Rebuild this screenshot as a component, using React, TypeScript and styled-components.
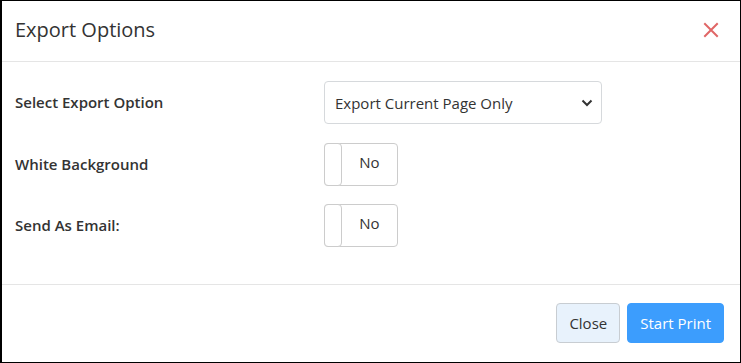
import React from "react";
import styled, { createGlobalStyle } from "styled-components";

const Global = createGlobalStyle`
  html, body { margin: 0; padding: 0; background: #fff; }
  body { font-family: "Open Sans", "Noto Sans", sans-serif; color: #333; }
`;

const Modal = styled.div`
  box-sizing: border-box;
  width: 741px;
  height: 363px;
  border: 1px solid #000;
  border-left-width: 2px;
  background: #fff;
  display: flex;
  flex-direction: column;
`;

const Header = styled.div`
  height: 60px;
  border-bottom: 1px solid #e5e5e5;
  display: flex;
  align-items: center;
  justify-content: space-between;
  padding: 0 21px 0 13px;
`;

const Title = styled.h4`
  margin: 0;
  font-size: 20px;
  font-weight: 400;
  color: #333;
  padding-bottom: 3px;
`;

const CloseX = styled.button`
  border: 0;
  background: none;
  padding: 0;
  width: 16px;
  height: 16px;
  display: flex;
  align-items: center;
  justify-content: center;
  cursor: pointer;
  margin-bottom: 2px;
`;

const Body = styled.div`
  flex: 1;
  padding: 19px 13px 0 13px;
  display: flex;
  flex-direction: column;
  gap: 18.5px;
  border-bottom: 1px solid #e5e5e5;
`;

const Row = styled.div`
  display: grid;
  grid-template-columns: 309px 1fr;
  align-items: center;
`;

const Label = styled.label`
  font-size: 15px;
  font-weight: 600;
  color: #333;
  padding-bottom: 1px;
`;

const SelectWrap = styled.div`
  position: relative;
  width: 278px;
`;

const Select = styled.select`
  appearance: none;
  -webkit-appearance: none;
  width: 100%;
  height: 43px;
  box-sizing: border-box;
  border: 1px solid #d6d9dc;
  border-radius: 4px;
  background: #fff;
  padding: 0 30px 0 10px;
  font-family: "Open Sans", "Noto Sans", sans-serif;
  font-size: 15px;
  color: #333;
  outline: none;
`;

const Chevron = styled.svg`
  position: absolute;
  right: 9px;
  top: 18px;
  pointer-events: none;
`;

const Toggle = styled.div`
  box-sizing: border-box;
  width: 74px;
  height: 43px;
  border: 1px solid #ccc;
  border-radius: 4px;
  display: flex;
  align-items: stretch;
  background: #fff;
`;

const Handle = styled.span`
  width: 16px;
  margin: -1px 0 -1px -1px;
  border: 1px solid #ccc;
  border-radius: 4px;
  background: #fff;
`;

const ToggleText = styled.span`
  flex: 1;
  display: flex;
  align-items: center;
  justify-content: center;
  font-size: 15px;
  color: #333;
  padding-bottom: 5px;
`;

const Footer = styled.div`
  height: 77px;
  display: flex;
  align-items: center;
  justify-content: flex-end;
  gap: 7px;
  padding: 0 16px 2px 0;
  box-sizing: border-box;
`;

const Button = styled.button<{ $primary?: boolean }>`
  height: 40px;
  box-sizing: border-box;
  border-radius: 4px;
  font-family: "Open Sans", "Noto Sans", sans-serif;
  font-size: 15px;
  padding: 0 12px;
  cursor: pointer;
  border: 1px solid ${(p) => (p.$primary ? "#3c9dfd" : "#c8cdd2")};
  background: ${(p) => (p.$primary ? "#3c9dfd" : "#e8f2fc")};
  color: ${(p) => (p.$primary ? "#fff" : "#333")};
`;

function ToggleField() {
  return (
    <Toggle>
      <Handle />
      <ToggleText>No</ToggleText>
    </Toggle>
  );
}

export default function App() {
  return (
    <>
      <Global />
      <Modal>
        <Header>
          <Title>Export Options</Title>
          <CloseX aria-label="Close">
            <svg width="16" height="16" viewBox="0 0 16 16">
              <path d="M2 2 L14 14 M14 2 L2 14" stroke="#e06666" strokeWidth="2" strokeLinecap="square" />
            </svg>
          </CloseX>
        </Header>
        <Body>
          <Row>
            <Label>Select Export Option</Label>
            <SelectWrap>
              <Select defaultValue="current">
                <option value="current">Export Current Page Only</option>
                <option value="all">Export All Pages</option>
              </Select>
              <Chevron width="12" height="8" viewBox="0 0 12 8">
                <path d="M1.5 1.5 L6 6 L10.5 1.5" fill="none" stroke="#333" strokeWidth="2" />
              </Chevron>
            </SelectWrap>
          </Row>
          <Row>
            <Label>White Background</Label>
            <ToggleField />
          </Row>
          <Row>
            <Label>Send As Email:</Label>
            <ToggleField />
          </Row>
        </Body>
        <Footer>
          <Button>Close</Button>
          <Button $primary>Start Print</Button>
        </Footer>
      </Modal>
    </>
  );
}
